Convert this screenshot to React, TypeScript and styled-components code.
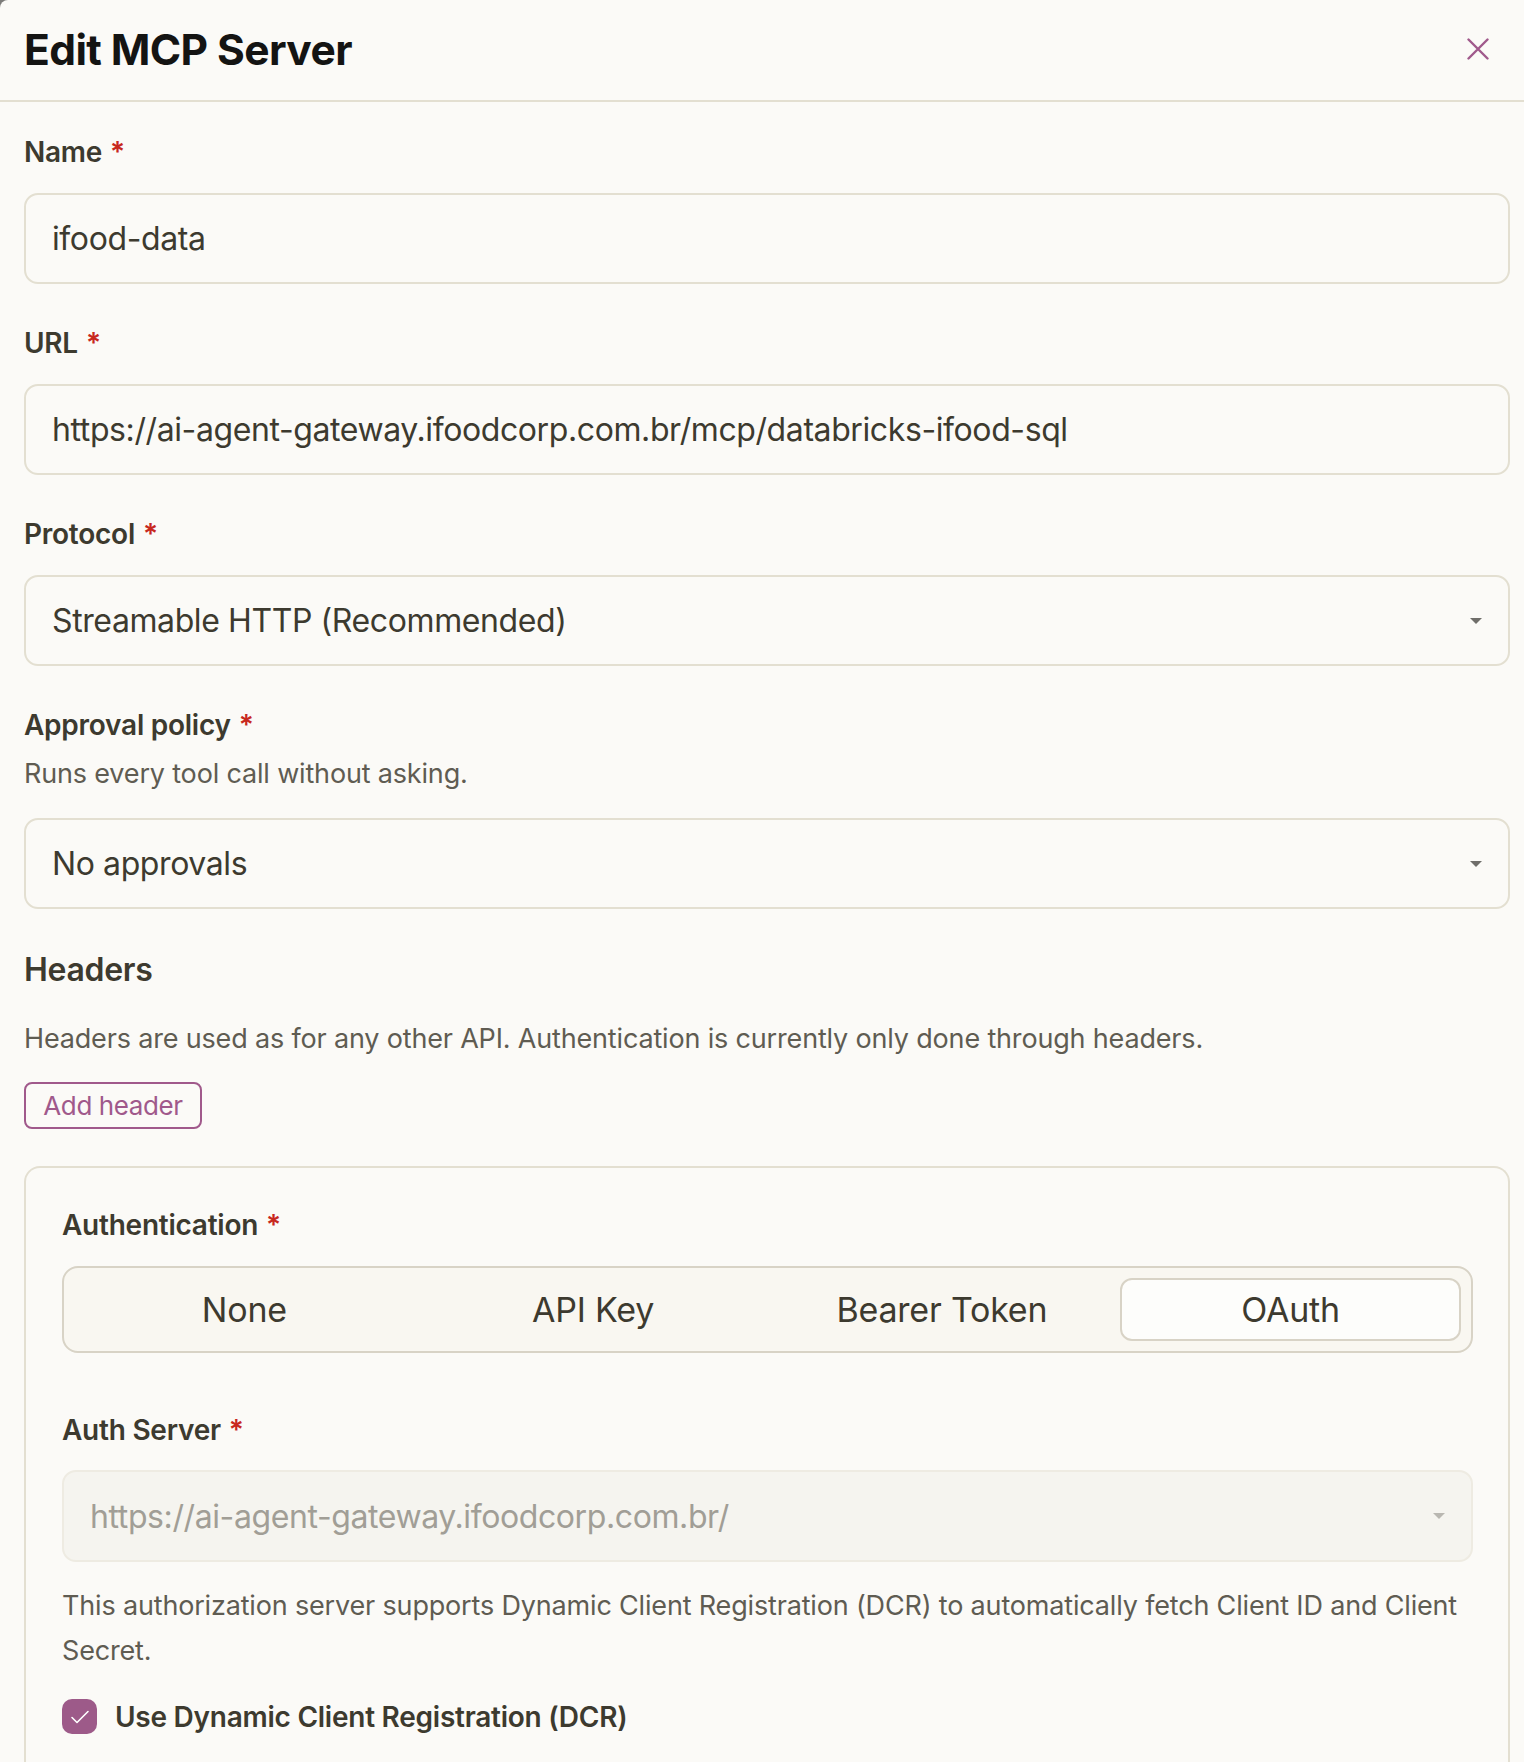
import React from "react";
import styled, { createGlobalStyle } from "styled-components";

const GlobalStyle = createGlobalStyle`
  html, body {
    margin: 0;
    padding: 0;
    background: #7c7c7a;
  }
  * { box-sizing: border-box; }
  body {
    font-family: Inter, "Noto Sans", "Liberation Sans", sans-serif;
    -webkit-font-smoothing: antialiased;
  }
`;

const Panel = styled.div`
  background: #fbfaf7;
  min-height: 1762px;
  border-top-left-radius: 8px;
  overflow: hidden;
`;

const Header = styled.header`
  height: 102px;
  display: flex;
  align-items: center;
  justify-content: space-between;
  padding: 0 34px 2px 24px;
  border-bottom: 2px solid #e3dfd1;
`;

const Title = styled.h1`
  margin: 0;
  font-size: 42.5px;
  font-weight: 700;
  letter-spacing: -0.6px;
  color: #141413;
`;

const CloseButton = styled.button`
  border: 0;
  background: transparent;
  padding: 0;
  width: 24px;
  height: 24px;
  display: flex;
  align-items: center;
  justify-content: center;
  color: #a0598b;
  cursor: pointer;
`;

const Body = styled.div`
  padding: 32px 14px 0 24px;
  display: flex;
  flex-direction: column;
  gap: 41px;
`;

const Field = styled.div`
  display: flex;
  flex-direction: column;
`;

const LabelBlock = styled.div<{ $after?: number }>`
  display: flex;
  flex-direction: column;
  gap: 13px;
  margin-bottom: ${(p) => p.$after ?? 23}px;
`;

const Label = styled.label`
  font-size: 28px;
  line-height: 36px;
  font-weight: 600;
  letter-spacing: -0.25px;
  color: #3d3a2f;
`;

const Required = styled.span`
  color: #c8281e;
  margin-left: 8px;
`;

const Hint = styled.p`
  margin: 0;
  font-size: 27px;
  line-height: 36px;
  letter-spacing: -0.17px;
  color: #5f5c52;
`;

const TextInput = styled.input`
  height: 91px;
  width: 100%;
  border: 2px solid #e3dfd1;
  border-radius: 14px;
  background: #fbfaf7;
  padding: 0 26px;
  font-family: inherit;
  font-size: 32px;
  letter-spacing: -0.4px;
  color: #3d3a2f;
  outline: none;
`;

const SelectBox = styled.div<{ $disabled?: boolean; $height?: number }>`
  height: ${(p) => p.$height ?? 91}px;
  display: flex;
  align-items: center;
  justify-content: space-between;
  border: 2px solid ${(p) => (p.$disabled ? "#eeebe2" : "#e3dfd1")};
  border-radius: 14px;
  background: ${(p) => (p.$disabled ? "#f5f4ef" : "#fbfaf7")};
  padding: 0 26px 0 26px;
  font-size: 32px;
  letter-spacing: -0.4px;
  color: ${(p) => (p.$disabled ? "#a19e96" : "#3d3a2f")};
`;

const Caret = styled.svg<{ $muted?: boolean }>`
  width: 12px;
  height: 6px;
  fill: ${(p) => (p.$muted ? "#b9b7b1" : "#6f6e6a")};
  flex: none;
`;

const Section = styled.section`
  display: flex;
  flex-direction: column;
`;

const SectionTitle = styled.h2`
  margin: 0;
  font-size: 32px;
  line-height: 40px;
  font-weight: 600;
  letter-spacing: -0.3px;
  color: #3d3a2f;
`;

const SectionHint = styled(Hint)`
  margin-top: 31px;
`;

const OutlineButton = styled.button`
  margin-top: 25px;
  align-self: flex-start;
  height: 47px;
  width: 178px;
  border: 2px solid #a0598b;
  border-radius: 8px;
  background: transparent;
  font-family: inherit;
  font-size: 26px;
  letter-spacing: -0.4px;
  color: #a0598b;
  padding: 0;
`;

const Card = styled.div`
  margin-top: 37px;
  border: 2px solid #e3dfd1;
  border-bottom: 0;
  border-radius: 16px 16px 0 0;
  padding: 39px 35px 40px 36px;
  display: flex;
  flex-direction: column;
`;

const Segmented = styled.div`
  height: 87px;
  display: grid;
  grid-template-columns: repeat(4, 1fr);
  gap: 8px;
  padding: 10px;
  border: 2px solid #d8d3c6;
  border-radius: 16px;
  background: #f9f7f1;
`;

const Segment = styled.button<{ $active?: boolean }>`
  border: 2px solid ${(p) => (p.$active ? "#d8d3c6" : "transparent")};
  border-radius: 12px;
  background: ${(p) => (p.$active ? "#fdfdfb" : "transparent")};
  font-family: inherit;
  font-size: 34px;
  letter-spacing: -0.2px;
  color: #3d3a2f;
  padding: 0;
`;

const CardField = styled(Field)<{ $gap: number }>`
  margin-top: ${(p) => p.$gap}px;
`;

const Note = styled.p`
  margin: 21px 0 0;
  font-size: 27px;
  line-height: 45px;
  letter-spacing: -0.17px;
  color: #5f5c52;
`;

const CheckRow = styled.label`
  margin-top: 26px;
  display: flex;
  align-items: center;
  gap: 18px;
  font-size: 28px;
  font-weight: 600;
  letter-spacing: -0.25px;
  color: #3d3a2f;
`;

const CheckBox = styled.span`
  width: 35px;
  height: 35px;
  border-radius: 10px;
  background: #9d5a89;
  display: flex;
  align-items: center;
  justify-content: center;
  flex: none;
`;

const CaretIcon = ({ muted }: { muted?: boolean }) => (
  <Caret $muted={muted} viewBox="0 0 12 6">
    <path d="M0 0h12L6 6z" />
  </Caret>
);

const Req = () => <Required>*</Required>;

const modes = ["None", "API Key", "Bearer Token", "OAuth"];

export default function App() {
  return (
    <>
      <GlobalStyle />
      <Panel>
        <Header>
          <Title>Edit MCP Server</Title>
          <CloseButton aria-label="Close">
            <svg width="22" height="22" viewBox="0 0 22 22" fill="none">
              <path d="M1.5 1.5l19 19M20.5 1.5l-19 19" stroke="currentColor" strokeWidth="2.4" strokeLinecap="round" />
            </svg>
          </CloseButton>
        </Header>
        <Body>
          <Field>
            <LabelBlock>
              <Label>Name<Req /></Label>
            </LabelBlock>
            <TextInput readOnly value="ifood-data" />
          </Field>
          <Field>
            <LabelBlock>
              <Label>URL<Req /></Label>
            </LabelBlock>
            <TextInput readOnly value="https://ai-agent-gateway.ifoodcorp.com.br/mcp/databricks-ifood-sql" />
          </Field>
          <Field>
            <LabelBlock>
              <Label>Protocol<Req /></Label>
            </LabelBlock>
            <SelectBox>
              <span>Streamable HTTP (Recommended)</span>
              <CaretIcon />
            </SelectBox>
          </Field>
          <Field>
            <LabelBlock $after={26}>
              <Label>Approval policy<Req /></Label>
              <Hint>Runs every tool call without asking.</Hint>
            </LabelBlock>
            <SelectBox>
              <span>No approvals</span>
              <CaretIcon />
            </SelectBox>
          </Field>
          <Section>
            <SectionTitle>Headers</SectionTitle>
            <SectionHint>
              Headers are used as for any other API. Authentication is currently only done through headers.
            </SectionHint>
            <OutlineButton>Add header</OutlineButton>
            <Card>
              <Field>
                <LabelBlock>
                  <Label>Authentication<Req /></Label>
                </LabelBlock>
                <Segmented>
                  {modes.map((m) => (
                    <Segment key={m} $active={m === "OAuth"}>
                      {m}
                    </Segment>
                  ))}
                </Segmented>
              </Field>
              <CardField $gap={59}>
                <LabelBlock $after={22}>
                  <Label>Auth Server<Req /></Label>
                </LabelBlock>
                <SelectBox $disabled $height={92}>
                  <span>https://ai-agent-gateway.ifoodcorp.com.br/</span>
                  <CaretIcon muted />
                </SelectBox>
                <Note>
                  This authorization server supports Dynamic Client Registration (DCR) to automatically fetch Client ID and Client Secret.
                </Note>
                <CheckRow>
                  <CheckBox>
                    <svg width="22" height="22" viewBox="0 0 22 22" fill="none">
                      <path d="M3 11.5l5 5 11-11" stroke="#fff" strokeWidth="1.6" strokeLinecap="round" strokeLinejoin="round" />
                    </svg>
                  </CheckBox>
                  Use Dynamic Client Registration (DCR)
                </CheckRow>
              </CardField>
            </Card>
          </Section>
        </Body>
      </Panel>
    </>
  );
}
